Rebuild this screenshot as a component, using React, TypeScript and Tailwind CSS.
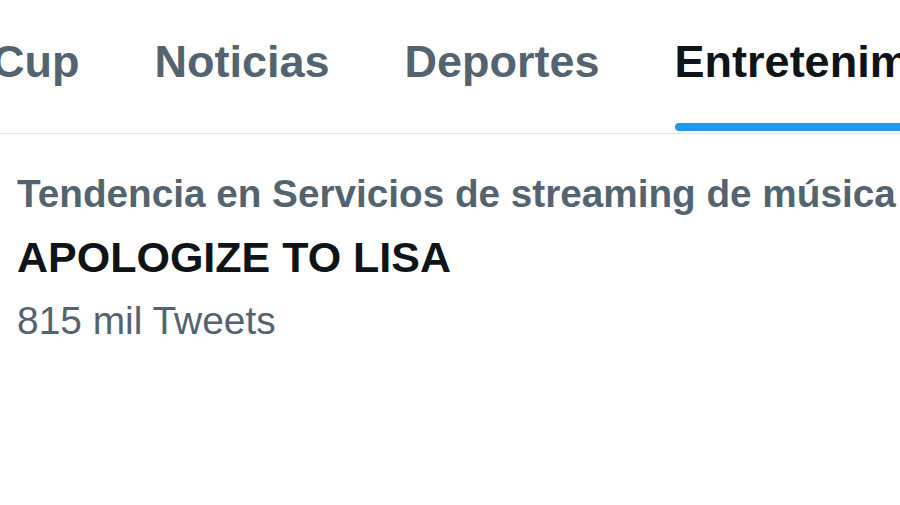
const tabs = ['Cup', 'Noticias', 'Deportes', 'Entretenimiento'];
const active = 'Entretenimiento';

export default function App() {
  return (
    <div className="w-[900px] h-[505px] overflow-hidden bg-white font-['Liberation_Sans',Arial,sans-serif]">
      <nav className="border-b-[1.5px] border-[#e3e6e8]">
        <div className="flex gap-[75px] -ml-[8px] pt-[36px] whitespace-nowrap">
          {tabs.map((t) => (
            <div key={t} className="flex flex-col">
              <span
                className={`text-[45px] leading-[52px] font-bold ${
                  t === active ? 'text-[#0f1419]' : 'text-[#536471]'
                }`}
              >
                {t}
              </span>
              <div
                className={`mt-[35px] h-[8px] rounded-full ${t === active ? 'bg-[#1d9bf0]' : 'bg-transparent'}`}
              />
            </div>
          ))}
        </div>
        <div className="h-[2px]" />
      </nav>

      <section className="px-[17px] pt-[37px]">
        <p className="text-[38.7px] leading-[46px] font-bold text-[#536471] whitespace-nowrap">
          Tendencia en Servicios de streaming de música
        </p>
        <h2 className="mt-[15px] text-[43px] leading-[50px] font-bold text-[#0f1419]">APOLOGIZE TO LISA</h2>
        <p className="mt-[16px] text-[38.9px] leading-[46px] text-[#536471]">815 mil Tweets</p>
      </section>
    </div>
  );
}
